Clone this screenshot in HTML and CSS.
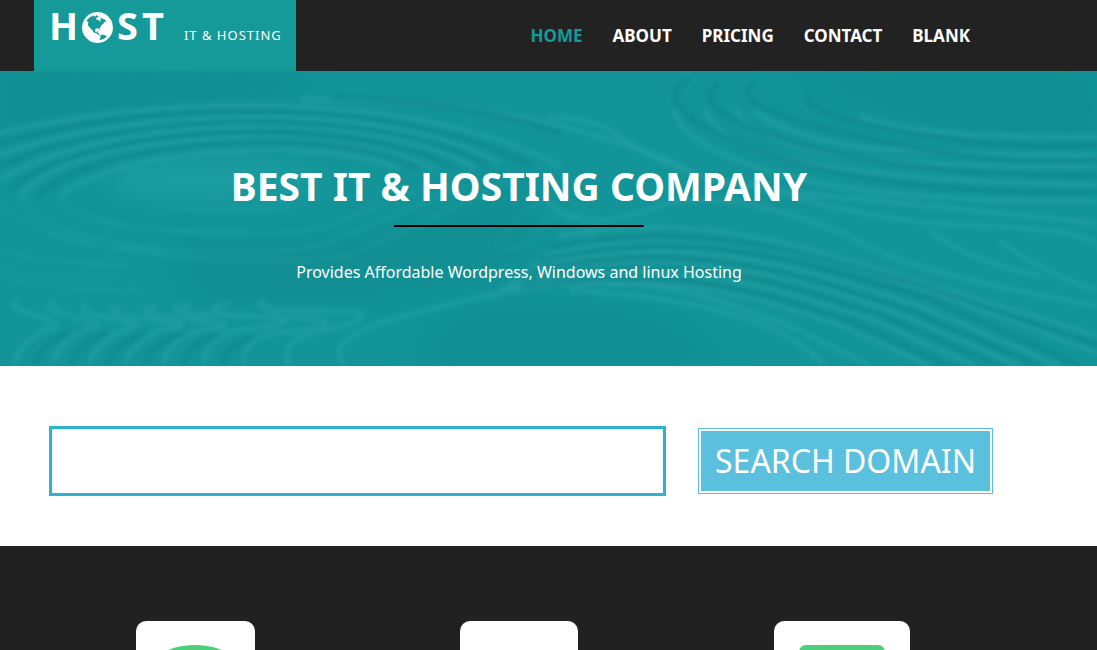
FILE: index.html
```html
<!DOCTYPE html>
<html lang="en">
<head>
    <meta charset="UTF-8">
    <meta name="viewport" content="width=device-width, initial-scale=1.0">
    <title>Host - IT &amp; Hosting</title>
    <link rel="stylesheet" href="styles.css">
</head>
<body>
    <header class="navbar">
        <div class="container navbar-inner">
            <a class="brand" href="#">
                <strong class="brand-name">H<svg class="globe" viewBox="128 128 1536 1536" role="img" aria-label="O"><path fill="currentColor" d="M896 128q209 0 385.500 103t279.500 279.500 103 385.500-103 385.500-279.500 279.500-385.500 103-385.500-103-279.500-279.500-103-385.500 103-385.500 279.500-279.500 385.500-103zm274 521q-2 1-9.500 9.500t-13.500 9.500q2 0 4.500-5t5-11 3.500-7q6-7 22-15 14-6 52-12 34-8 51 11-2-2 9.500-13t14.500-12q3-2 15-4.500t15-7.500l2-22q-12 1-17.500-7t-6.500-21q0 2-6 8 0-7-4.500-8t-11.500 1-9 1q-10-3-15-7.500t-8-16.500-4-15q-2-5-9.500-11t-9.500-10q-1-2-2.500-5.500t-3-6.500-4-5.500-5.500-2.500-7 5-7.500 10-4.500 5q-3-2-6-1.500t-4.500 1-4.500 3-5 3.500q-3 2-8.500 3t-8.500 2q15-5-1-11-10-4-16-3 9-4 7.500-12t-8.500-14h5q-1-4-8.500-8.500t-17.500-8.500-13-6q-8-5-34-9.500t-33-.5q-5 6-4.500 10.500t4 14 3.500 12.500q1 6-5.500 13t-6.500 12q0 7 14 15.500t10 21.500q-3 8-16 16t-16 12q-5 8-1.500 18.500t10.500 16.500q2 2 1.500 4t-3.500 4.500-5.500 4-6.500 3.500l-3 2q-11 5-20.500-6t-13.500-26q-7-25-16-30-23-8-29 1-5-13-41-26-25-9-58-4 6-1 0-15-7-15-19-12 3-6 4-17.500t1-13.500q3-13 12-23 1-1 7-8.500t9.500-13.500.5-6q35 4 50-11 5-5 11.500-17t10.500-17q9-6 14-5.500t14.500 5.500 14.500 5q14 1 15.500-11t-7.500-20q12 1 3-17-4-7-8-9-12-4-27 5-8 4 2 8-1-1-9.500 10.500t-16.500 17.500-16-5q-1-1-5.500-13.500t-9.500-13.500q-8 0-16 15 3-8-11-15t-24-8q19-12-8-27-7-4-20.500-5t-19.500 4q-5 7-5.500 11.500t5 8 10.500 5.500 11.500 4 8.500 3q14 10 8 14-2 1-8.500 3.500t-11.500 4.500-6 4q-3 4 0 14t-2 14q-5-5-9-17.500t-7-16.500q7 9-25 6l-10-1q-4 0-16 2t-20.500 1-13.500-8q-4-8 0-20 1-4 4-2-4-3-11-9.500t-10-8.500q-46 15-94 41 6 1 12-1 5-2 13-6.500t10-5.500q34-14 42-7l5-5q14 16 20 25-7-4-30-1-20 6-22 12 7 12 5 18-4-3-11.500-10t-14.500-11-15-5q-16 0-22 1-146 80-235 222 7 7 12 8 4 1 5 9t2.500 11 11.500-3q9 8 3 19 1-1 44 27 19 17 21 21 3 11-10 18-1-2-9-9t-9-4q-3 5 .5 18.500t10.500 12.500q-7 0-9.500 16t-2.500 35.500-1 23.500l2 1q-3 12 5.500 34.500t21.500 19.500q-13 3 20 43 6 8 8 9 3 2 12 7.500t15 10 10 10.500q4 5 10 22.500t14 23.500q-2 6 9.500 20t10.500 23q-1 0-2.500 1t-2.500 1q3 7 15.500 14t15.500 13q1 3 2 10t3 11 8 2q2-20-24-62-15-25-17-29-3-5-5.500-15.500t-4.500-14.500q2 0 6 1.500t8.500 3.500 7.500 4 2 3q-3 7 2 17.500t12 18.500 17 19 12 13q6 6 14 19.500t0 13.500q9 0 20 10t17 20q5 8 8 26t5 24q2 7 8.500 13.500t12.500 9.500l16 8 13 7q5 2 18.500 10.500t21.500 11.500q10 4 16 4t14.500-2.500 13.500-3.500q15-2 29 15t21 21q36 19 55 11-2 1 .5 7.500t8 15.500 9 14.500 5.500 8.500q5 6 18 15t18 15q6-4 7-9-3 8 7 20t18 10q14-3 14-32-31 15-49-18 0-1-2.500-5.500t-4-8.500-2.500-8.500 0-7.500 5-3q9 0 10-3.500t-2-12.500-4-13q-1-8-11-20t-12-15q-5 9-16 8t-16-9q0 1-1.500 5.500t-1.500 6.500q-13 0-15-1 1-3 2.500-17.500t3.500-22.500q1-4 5.500-12t7.500-14.500 4-12.500-4.500-9.500-17.500-2.500q-19 1-26 20-1 3-3 10.500t-5 11.500-9 7q-7 3-24 2t-24-5q-13-8-22.500-29t-9.500-37q0-10 2.500-26.500t3-25-5.500-24.500q3-2 9-9.500t10-10.500q2-1 4.500-1.500t4.500 0 4-1.500 3-6q-1-1-4-3-3-3-4-3 7 3 28.500-1.500t27.500 1.500q15 11 22-2 0-1-2.500-9.500t-.5-13.500q5 27 29 9 3 3 15.500 5t17.500 5q3 2 7 5.500t5.500 4.500 5-.5 8.500-6.500q10 14 12 24 11 40 19 44 7 3 11 2t4.500-9.500 0-14-1.500-12.500l-1-8v-18l-1-8q-15-3-18.500-12t1.500-18.500 15-18.500q1-1 8-3.500t15.500-6.500 12.500-8q21-19 15-35 7 0 11-9-1 0-5-3t-7.500-5-4.500-2q9-5 2-16 5-3 7.500-11t7.500-10q9 12 21 2 7-8 1-16 5-7 20.500-10.500t18.500-9.500q7 2 8-2t1-12 3-12q4-5 15-9t13-5l17-11q3-4 0-4 18 2 31-11 10-11-6-20 3-6-3-9.500t-15-5.500q3-1 11.500-.5t10.500-1.500q15-10-7-16-17-5-43 12zm-163 877q206-36 351-189-3-3-12.500-4.500t-12.500-3.500q-18-7-24-8 1-7-2.500-13t-8-9-12.500-8-11-7q-2-2-7-6t-7-5.500-7.500-4.500-8.500-2-10 1l-3 1q-3 1-5.500 2.500t-5.500 3-4 3 0 2.500q-21-17-36-22-5-1-11-5.500t-10.500-7-10-1.500-11.500 7q-5 5-6 15t-2 13q-7-5 0-17.500t2-18.500q-3-6-10.500-4.500t-12 4.500-11.500 8.500-9 6.500-8.500 5.500-8.500 7.500q-3 4-6 12t-5 11q-2-4-11.500-6.500t-9.500-5.500q2 10 4 35t5 38q7 31-12 48-27 25-29 40-4 22 12 26 0 7-8 20.500t-7 21.500q0 6 2 16z"/></svg>ST</strong>
                <span class="brand-tag">IT &amp; HOSTING</span>
            </a>
            <nav class="menu">
                <a class="active" href="#">HOME</a>
                <a href="#">ABOUT</a>
                <a href="#">PRICING</a>
                <a href="#">CONTACT</a>
                <a href="#">BLANK</a>
            </nav>
        </div>
    </header>

    <section class="hero">
        <svg class="waves" viewBox="0 0 1097 295" preserveAspectRatio="none" aria-hidden="true">
            <!-- broad shading -->
            <g class="shade">
                <path d="M500 0H1097V75Q900 60 780 0Z"/>
                <path d="M0 0H300V30Q100 30 0 60Z"/>
                <path d="M420 295Q430 230 560 235T720 295Z"/>
                <path d="M180 170Q380 190 520 120L530 190Q400 240 190 225Z"/>
            </g>
            <g class="glow">
                <ellipse cx="215" cy="110" rx="110" ry="20"/>
            </g>
            <!-- ripple rings on the left -->
            <g class="light">
                <path d="M60 125C110 80 320 62 400 98"/>
                <path d="M20 125C70 60 330 47 435 98"/>
                <path d="M0 110C90 48 360 32 475 97"/>
                <path d="M0 84C120 38 380 26 500 92"/>
                <path d="M0 62C150 25 410 16 560 95"/>
                <path d="M300 28Q470 28 580 60T690 102"/>
            </g>
            <g class="dark">
                <path d="M38 126C85 70 330 50 418 97"/>
                <path d="M8 120C80 54 350 39 455 97"/>
                <path d="M0 96C100 43 370 30 488 94"/>
                <path d="M0 73C130 31 390 20 530 94"/>
                <path d="M330 26Q480 32 560 62"/>
            </g>
            <g class="light thin">
                <path d="M60 125C60 150 200 175 320 158T430 115"/>
                <path d="M20 125C20 165 190 195 320 175T465 115"/>
                <path d="M0 135C60 180 220 200 350 185T510 110"/>
                <path d="M160 135Q210 142 290 138M95 150Q155 162 250 158M50 164Q100 180 200 181"/>
                <path d="M0 178Q30 192 130 194M0 196Q20 210 120 205M0 205Q40 220 140 218"/>
                <path d="M495 174Q555 105 548 140T500 180M550 150Q580 130 585 160T545 188M565 148Q620 125 590 170"/>
            </g>
            <!-- folds along the bottom -->
            <g class="light">
                <path d="M18 230Q5 236 37 245T48 258Q20 270 14 295"/>
                <path d="M56 230Q38 236 75 246T87 258Q58 270 52 295"/>
                <path d="M88 234Q70 240 110 247T128 258Q96 268 89 295"/>
                <path d="M120 236Q95 242 150 248T165 258Q131 270 125 295"/>
                <path d="M155 236Q125 242 190 248T200 259Q166 270 163 295"/>
                <path d="M190 234Q145 242 240 245T234 260Q205 270 203 295"/>
                <path d="M230 232Q180 243 280 246T265 264Q240 275 244 295"/>
                <path d="M265 230Q240 240 325 240T305 264Q282 274 288 295"/>
                <path d="M345 295Q320 268 400 246T560 212"/>
            </g>
            <g class="dark">
                <path d="M70 262Q40 272 34 295M108 262Q77 272 71 295M146 262Q114 272 107 295M184 263Q149 272 145 295M220 264Q186 272 184 295M255 266Q222 274 224 295"/>
            </g>
            <!-- right side currents -->
            <g class="light">
                <path d="M547 45C650 50 610 100 780 120T1097 152"/>
                <path d="M675 38Q680 75 780 103T1097 130"/>
                <path d="M705 38Q720 80 830 96T1097 114"/>
                <path d="M735 38Q760 78 870 88T1097 95"/>
                <path d="M755 40Q800 75 910 80T1097 84"/>
                <path d="M860 45Q920 68 1097 66"/>
                <path d="M750 110Q850 150 980 155T1097 181"/>
                <path d="M547 130Q580 165 650 138T850 165Q900 200 1097 235"/>
                <path d="M560 165Q680 140 830 184T1097 265"/>
                <path d="M545 184C700 145 850 195 930 220T1097 282"/>
                <path d="M530 195C700 155 820 205 920 235T1060 295"/>
                <path d="M520 203C700 170 820 215 900 243T1020 295"/>
                <path d="M510 212C700 180 790 225 870 247T975 295"/>
                <path d="M500 218C680 195 760 230 835 252T930 295"/>
                <path d="M560 214C690 205 740 240 790 255T870 295"/>
                <path d="M570 220C680 225 780 245 825 295"/>
                <path d="M1000 170Q1040 200 1097 220M930 160Q970 190 1040 205"/>
            </g>
            <g class="dark">
                <path d="M690 8Q640 35 760 80T1097 120"/>
                <path d="M720 12Q680 35 790 70T1097 104"/>
                <path d="M755 12Q720 35 860 66T1097 89"/>
                <path d="M810 20Q790 40 900 60T1097 75"/>
                <path d="M550 177C700 145 830 190 925 215T1097 274"/>
                <path d="M540 190C700 150 830 200 930 228T1080 295"/>
                <path d="M530 200C700 165 820 210 910 240T1040 295"/>
                <path d="M520 208C700 175 800 220 885 246T1000 295"/>
                <path d="M520 216C680 190 780 228 850 250T950 295"/>
            </g>
        </svg>
        <div class="container hero-text">
            <h1>BEST IT &amp; HOSTING COMPANY</h1>
            <hr>
            <p>Provides Affordable Wordpress, Windows and linux Hosting</p>
        </div>
    </section>

    <section class="search">
        <form class="container search-form">
            <input type="text" class="search-box" aria-label="Domain name">
            <button type="button" class="search-btn">SEARCH DOMAIN</button>
        </form>
    </section>

    <section class="features">
        <div class="container feature-list">
            <div class="feature">
                <div class="tile">
                    <svg width="89" height="80" viewBox="0 0 89 80" aria-hidden="true"><ellipse cx="44" cy="24" rx="44" ry="24"/></svg>
                </div>
            </div>
            <div class="feature">
                <div class="tile tile-blank"></div>
            </div>
            <div class="feature">
                <div class="tile">
                    <svg width="106" height="80" viewBox="0 0 106 80" aria-hidden="true"><rect x="10" width="86" height="80" rx="7"/></svg>
                </div>
            </div>
        </div>
    </section>
</body>
</html>
```
FILE: styles.css
```css
* {
    box-sizing: border-box;
}

body {
    font-family: "Noto Sans", "Open Sans", sans-serif;
    margin: 0;
    height: 100vh;
    display: flex;
    flex-direction: column;
    background-color: #fff;
    color: #fff;
}

.container {
    width: 100%;
    max-width: 970px;
    margin-left: 34px;
}

.navbar {
    background-color: #222;
}

.navbar-inner {
    display: flex;
    justify-content: space-between;
    align-items: stretch;
}

.brand {
    display: flex;
    align-items: baseline;
    gap: 16px;
    height: 71px;
    padding: 0 14px 0 15px;
    background-color: #159999;
    color: #fff;
    text-decoration: none;
}

.brand-name {
    font-size: 38px;
    line-height: 50px;
    letter-spacing: 4px;
}

.globe {
    width: 31px;
    height: 31px;
    margin-right: 4px;
    vertical-align: -3px;
}

.brand-tag {
    font-size: 13px;
    letter-spacing: 1px;
}

.menu {
    display: flex;
    align-items: center;
    gap: 30px;
    padding-right: 34px;
}

.menu a {
    color: #fff;
    font-size: 17px;
    font-weight: bold;
    text-decoration: none;
}

.menu .active {
    color: #159999;
}

.hero {
    position: relative;
    overflow: hidden;
    background-color: #129498;
}

.waves {
    position: absolute;
    width: 100%;
    height: 100%;
    fill: none;
    stroke-width: 5;
    filter: blur(2px);
}

.waves .light {
    stroke: #27a2a5;
    opacity: 0.6;
}

.waves .dark {
    stroke: #11888c;
    opacity: 0.7;
}

.waves .thin {
    stroke-width: 3;
    opacity: 0.4;
}

.waves .shade {
    fill: #118a8e;
    opacity: 0.5;
    filter: blur(16px);
}

.waves .glow {
    fill: #1c9da0;
    filter: blur(12px);
}

.hero-text {
    position: relative;
    padding: 88px 15px 81px;
    text-align: center;
}

.hero h1 {
    margin: 0;
    font-size: 39px;
    line-height: 54px;
}

.hero hr {
    width: 250px;
    height: 2px;
    margin: 12px auto 32px;
    border: 0;
    background-color: #000;
}

.hero p {
    margin: 0;
    font-size: 16px;
    line-height: 26px;
}

.search {
    padding: 60px 0 50px;
}

.search-form {
    display: flex;
    align-items: center;
    gap: 32px;
    padding: 0 11px 0 15px;
}

.search-box {
    flex: 1;
    min-width: 0;
    height: 70px;
    padding: 6px 12px;
    border: 3px solid #31b0d0;
    box-shadow: inset 0 1px 1px rgba(0, 0, 0, 0.08);
    font-size: 32px;
}

.search-btn {
    height: 66px;
    padding: 0 16px 2px;
    border: 1px solid #5bc0de;
    box-shadow: inset 0 0 0 2px #fff;
    background-color: #5bc0de;
    color: #fff;
    font-family: inherit;
    font-size: 32px;
}

.features {
    flex: 1;
    min-height: 0;
    overflow: hidden;
    padding-top: 75px;
    background-color: #212121;
}

.feature-list {
    display: grid;
    grid-template-columns: repeat(3, 1fr);
    justify-items: center;
}

.tile {
    padding: 24px 15px;
    border-radius: 10px;
    background-color: #fff;
}

.tile svg {
    display: block;
    fill: #4bcf7b;
}

.tile-blank {
    width: 118px;
    height: 128px;
}
```
